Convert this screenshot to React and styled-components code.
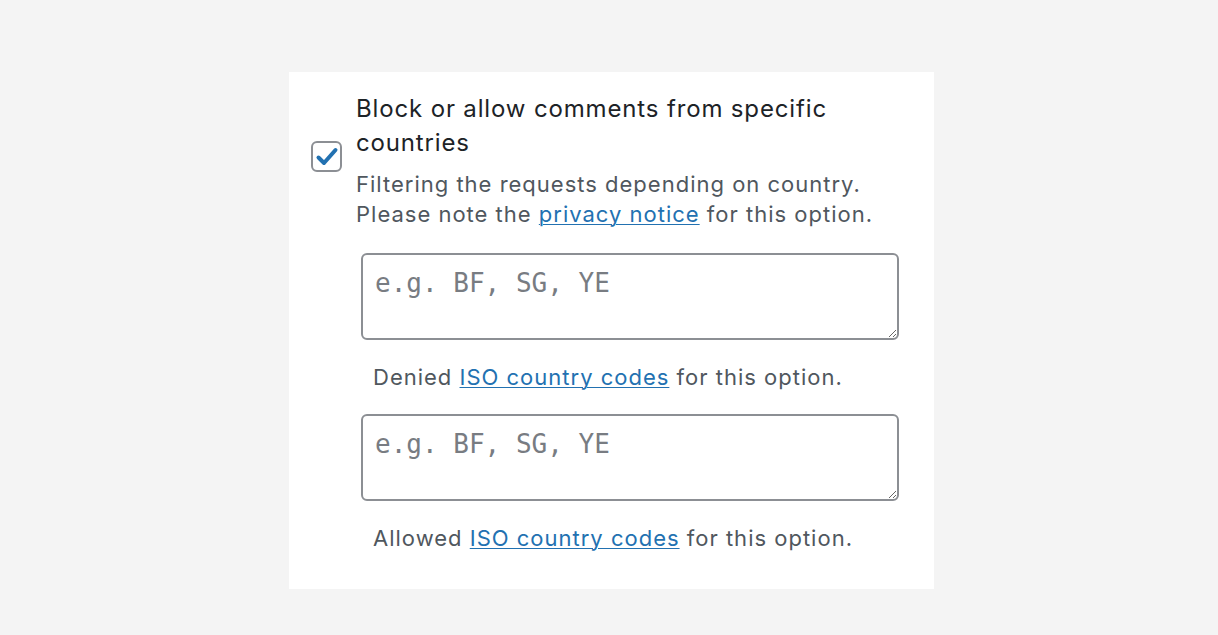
import React from "react";
import styled, { createGlobalStyle } from "styled-components";

const Global = createGlobalStyle`
  html, body { margin: 0; padding: 0; background: #f4f4f4; }
  body { font-family: Inter, "Noto Sans", sans-serif; }
`;

const Page = styled.div`
  min-height: 635px;
  display: flex;
  justify-content: center;
  padding: 72px 0 0 5px;
  box-sizing: border-box;
`;

const Panel = styled.div`
  width: 645px;
  height: 517px;
  background: #ffffff;
  box-sizing: border-box;
  padding: 20px 0 0 22px;
  display: flex;
  gap: 14px;
`;

const CheckCol = styled.div`
  padding-top: 49px;
`;

const Box = styled.span`
  display: flex;
  align-items: center;
  justify-content: center;
  width: 31px;
  height: 31px;
  box-sizing: border-box;
  border: 2px solid #8c8f94;
  border-radius: 6px;
  background: #fff;
`;

const Content = styled.div`
  display: flex;
  flex-direction: column;
`;

const Title = styled.div`
  font-size: 24px;
  line-height: 34px;
  letter-spacing: 0.85px;
  color: #1d2327;
  width: 520px;
`;

const Desc = styled.p`
  margin: ${(p) => p.$top || 0}px 0 0 ${(p) => p.$indent || 0}px;
  font-size: 22px;
  line-height: 30px;
  letter-spacing: 1px;
  color: #50575e;
`;

const Link = styled.a`
  color: #2271b1;
  text-decoration: underline;
  text-underline-offset: 2px;
  text-decoration-thickness: 1px;
`;

const Area = styled.textarea`
  display: block;
  margin: ${(p) => p.$top}px 0 0 5px;
  width: 538px;
  height: 87px;
  box-sizing: border-box;
  border: 2px solid #8c8f94;
  border-radius: 6px;
  padding: 10px 12px;
  font-family: "DejaVu Sans Mono", "Liberation Mono", monospace;
  font-size: 26px;
  line-height: 36px;
  color: #2c3338;
  resize: vertical;
  outline: none;
  &::placeholder { color: #787c82; }
`;

export default function App() {
  return (
    <>
      <Global />
      <Page>
        <Panel>
          <CheckCol>
            <Box>
              <svg width="24" height="22" viewBox="0 0 24 22">
                <path d="M3.5 11.5 L9 17 L20.5 4" fill="none" stroke="#2271b1" strokeWidth="4" strokeLinecap="round" strokeLinejoin="round" />
              </svg>
            </Box>
          </CheckCol>
          <Content>
            <Title>Block or allow comments from specific countries</Title>
            <Desc $top={9}>
              Filtering the requests depending on country.
              <br />
              Please note the <Link href="#">privacy notice</Link> for this option.
            </Desc>
            <Area $top={24} placeholder="e.g. BF, SG, YE" />
            <Desc $top={22} $indent={17}>
              Denied <Link href="#">ISO country codes</Link> for this option.
            </Desc>
            <Area $top={22} placeholder="e.g. BF, SG, YE" />
            <Desc $top={22} $indent={17}>
              Allowed <Link href="#">ISO country codes</Link> for this option.
            </Desc>
          </Content>
        </Panel>
      </Page>
    </>
  );
}
